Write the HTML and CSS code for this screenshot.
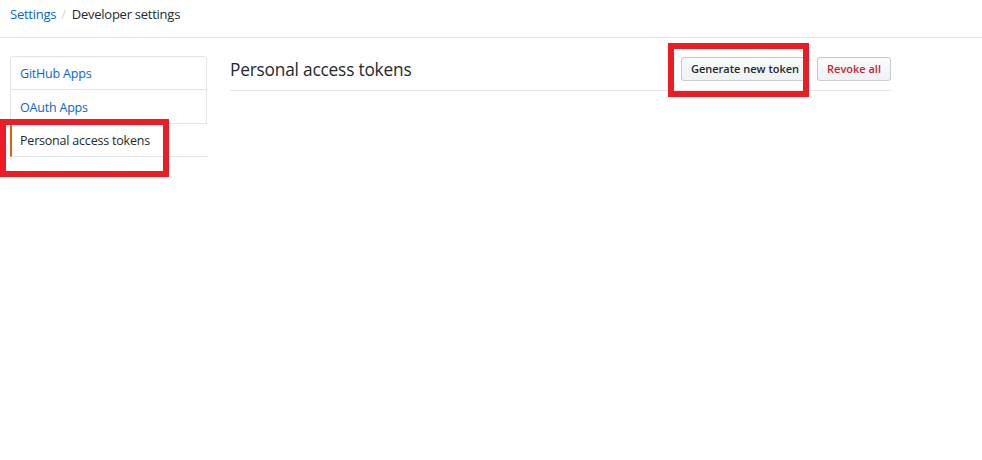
FILE: index.html
```html
<!DOCTYPE html>
<html>
<head>
<meta charset="utf-8">
<link rel="stylesheet" href="styles.css">
</head>
<body>
<div class="crumbs">
  <a class="crumb-link" href="#">Settings</a>
  <span class="sep">/</span>
  <span class="crumb-current">Developer settings</span>
</div>
<div class="layout">
  <nav class="menu">
    <a class="menu-item" href="#">GitHub Apps</a>
    <a class="menu-item" href="#">OAuth Apps</a>
    <a class="menu-item selected" href="#">Personal access tokens</a>
  </nav>
  <main class="main">
    <div class="subhead">
      <h2 class="subhead-title">Personal access tokens</h2>
      <div class="actions">
        <button class="btn btn-generate">Generate new token</button>
        <button class="btn btn-danger">Revoke all</button>
      </div>
    </div>
  </main>
</div>
<div class="mark mark-generate"></div>
<div class="mark mark-tokens"></div>
</body>
</html>
```

FILE: styles.css
```css
* { box-sizing: border-box; }
html, body { margin: 0; padding: 0; background: #fff; }
body {
  font-family: "Open Sans", "Noto Sans", Arial, sans-serif;
  color: #24292e;
  font-size: 13px;
  position: relative;
  width: 982px;
  height: 460px;
  overflow: hidden;
}
a { text-decoration: none; }

.crumbs {
  height: 38px;
  border-bottom: 1px solid #e1e4e8;
  padding: 5px 0 0 10px;
  display: flex;
  align-items: flex-start;
  font-size: 13px;
  letter-spacing: -0.25px;
  line-height: 18px;
}
.crumb-link { color: #0366d6; }
.sep { color: #d1d5da; margin: 0 6px 0 5px; }
.crumb-current { color: #24292e; }

.layout {
  display: flex;
  padding: 18px 0 0 10px;
  gap: 23px;
}
.menu {
  width: 197px;
  display: flex;
  flex-direction: column;
}
.menu-item {
  display: block;
  height: 34px;
  line-height: 32px;
  padding: 1px 0 0 9px;
  color: #0366d6;
  font-size: 12.5px;
  letter-spacing: -0.2px;
  border: 1px solid #e1e4e8;
  border-top: none;
}
.menu-item:first-child { border-top: 1px solid #e1e4e8; border-radius: 3px 3px 0 0; height: 34px; }
.menu-item:nth-child(2) { padding-top: 2px; }
.menu-item.selected {
  color: #24292e;
  border-right: none;
  border-left: 2px solid #e36209;
  padding: 0 0 0 8px;
  height: 33px;
  line-height: 33px;
}

.main { width: 661px; }
.subhead {
  display: flex;
  justify-content: space-between;
  align-items: flex-start;
  height: 35px;
  border-bottom: 1px solid #e1e4e8;
}
.subhead-title {
  margin: 0;
  font-weight: 400;
  font-size: 17.3px;
  letter-spacing: -0.2px;
  line-height: 28px;
}
.actions { display: flex; gap: 8px; margin-top: 1px; }
.btn {
  font-family: inherit;
  height: 24px;
  padding: 0;
  font-size: 11px;
  font-weight: 600;
  white-space: nowrap;
  color: #24292e;
  background: linear-gradient(#fafbfc, #eff3f6 90%);
  border: 1px solid rgba(27,31,35,0.2);
  border-radius: 3px;
  line-height: 22px;
  text-align: center;
}
.btn-generate { width: 128px; }
.btn-danger { color: #cb2431; width: 74px; }

.mark {
  position: absolute;
  border: 6px solid #ed1c24;
}
.mark-generate { left: 668px; top: 43px; width: 141px; height: 54px; }
.mark-tokens { left: 0; top: 119px; width: 169px; height: 58px; }
```
